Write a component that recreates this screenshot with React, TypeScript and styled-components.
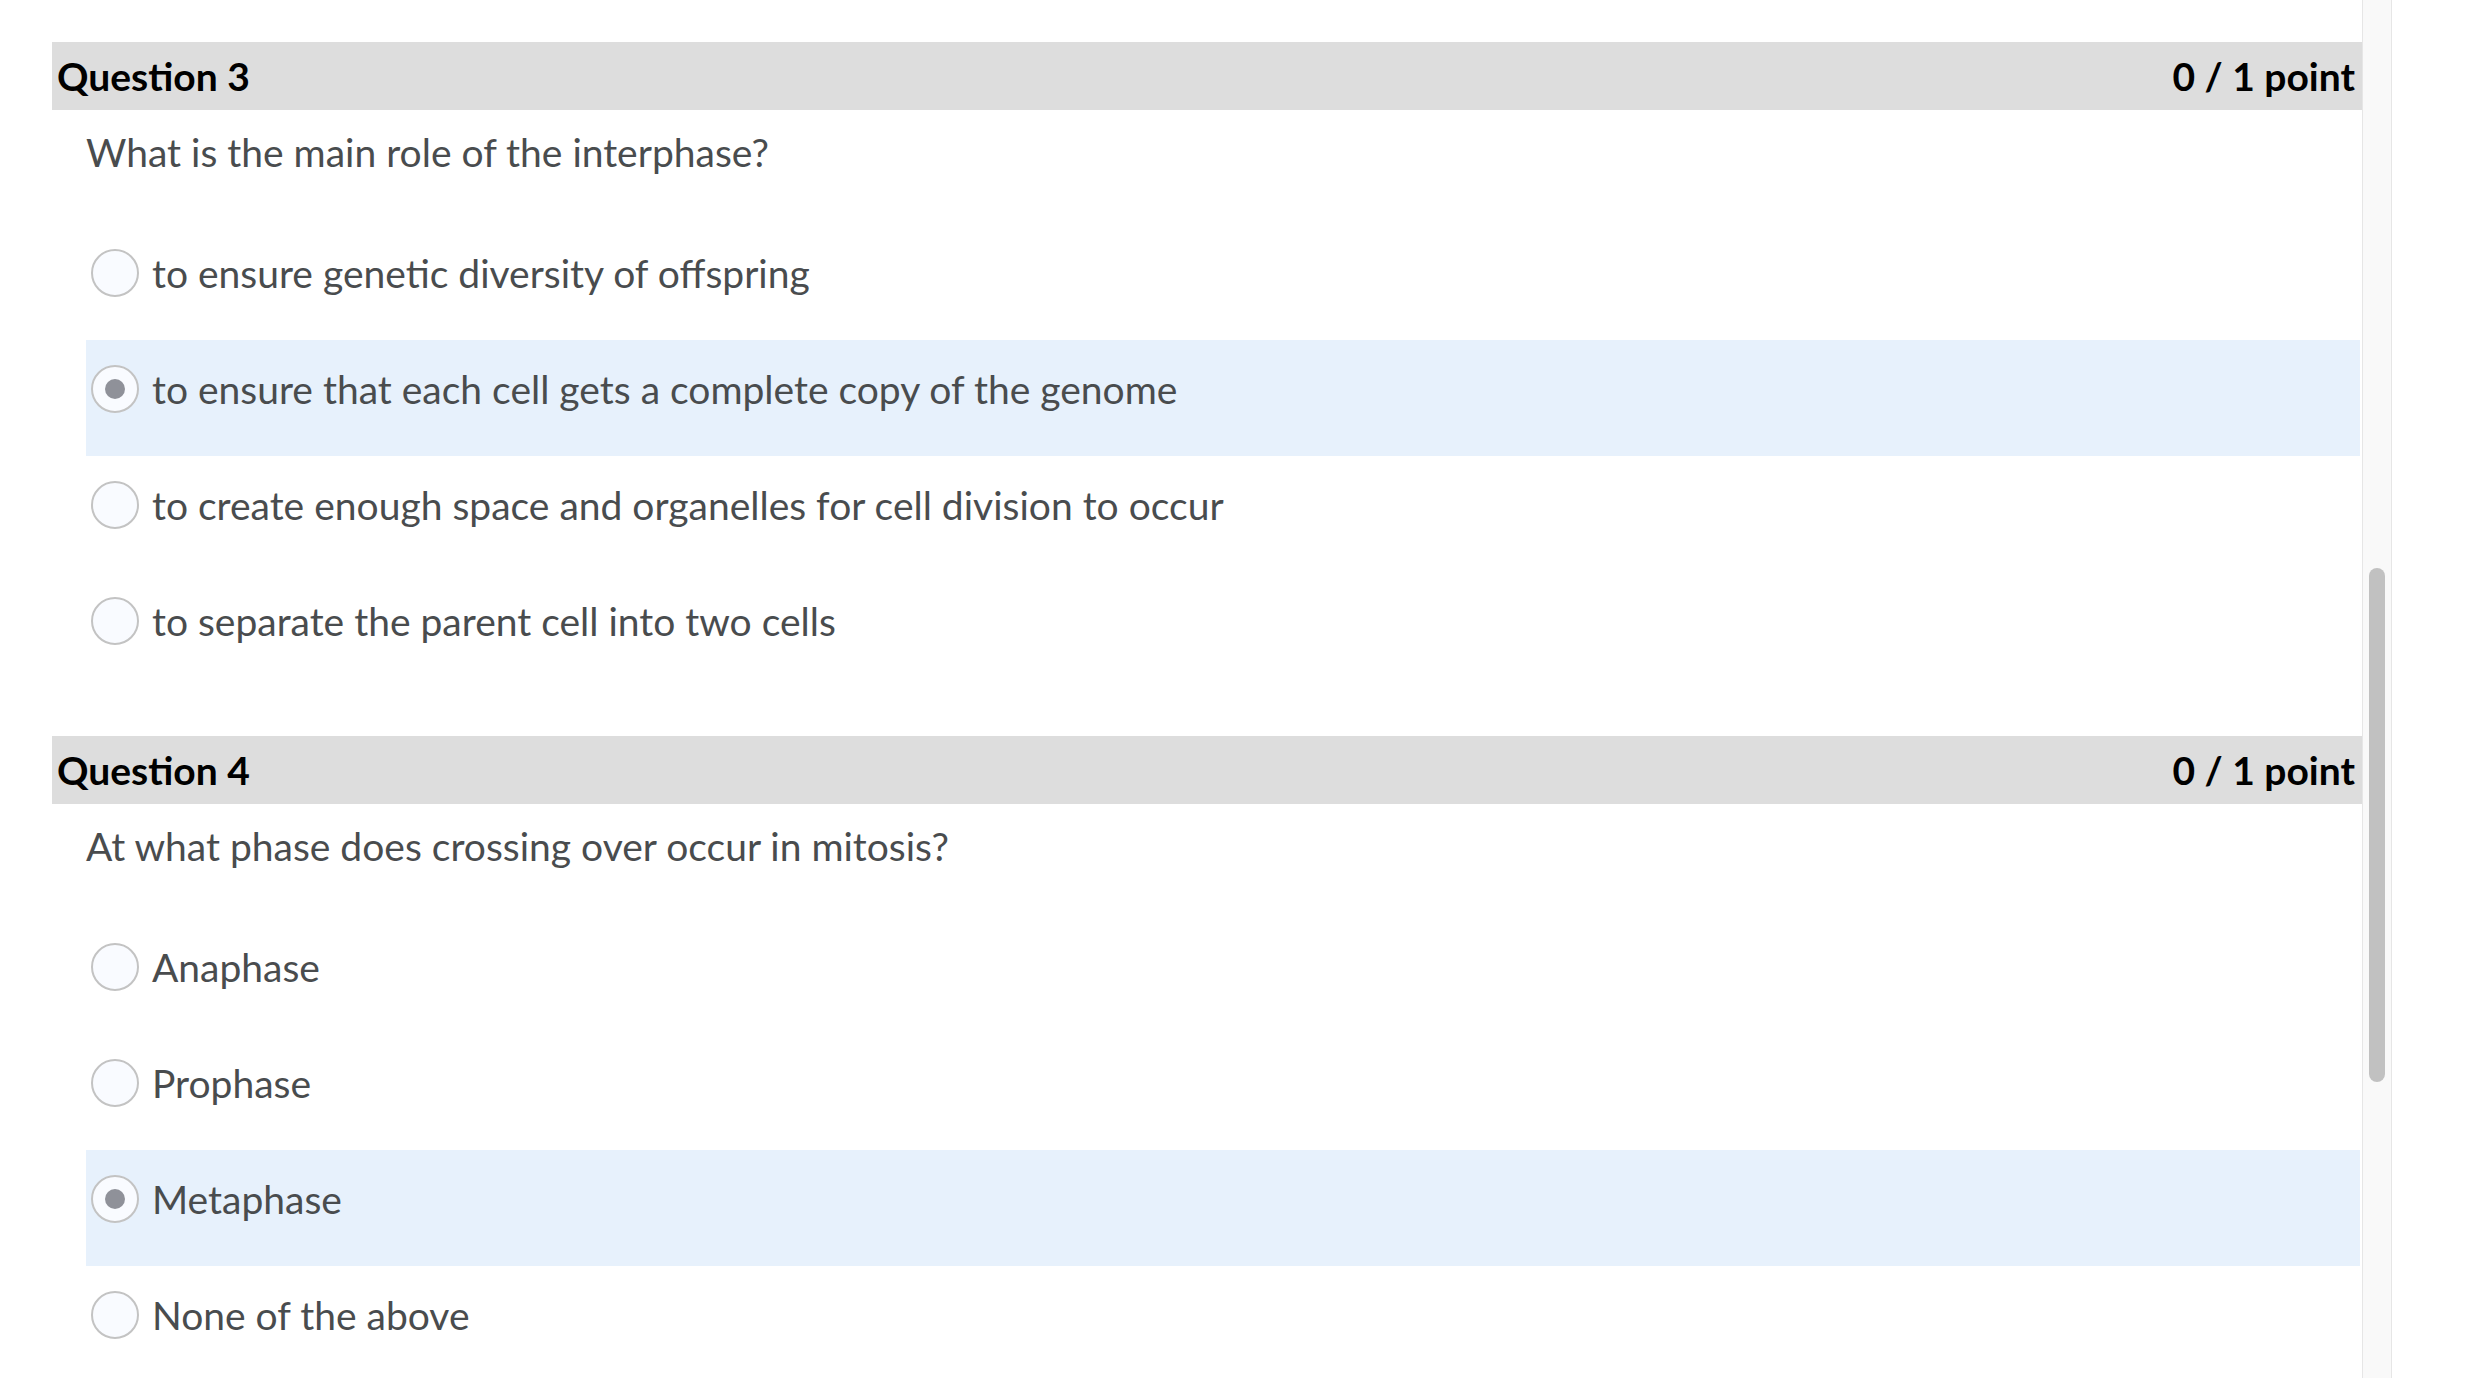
import React from "react";
import styled, { createGlobalStyle } from "styled-components";

const GlobalStyle = createGlobalStyle`
  html, body {
    margin: 0;
    padding: 0;
    background: #ffffff;
    overflow: hidden;
  }
  body {
    font-family: Lato, "Open Sans", sans-serif;
  }
`;

const Page = styled.div`
  display: flex;
  height: 1378px;
  overflow: hidden;
`;

const Content = styled.div`
  width: 2310px;
  padding: 42px 0 0 52px;
`;

const Scrollbar = styled.div`
  width: 28px;
  height: 100%;
  background: #f9f9f9;
  border-left: 1px solid #e6e6e6;
  border-right: 1px solid #e6e6e6;
  display: flex;
  justify-content: center;
`;

const Thumb = styled.div`
  width: 16px;
  height: 514px;
  margin-top: 568px;
  border-radius: 8px;
  background: #c1c1c1;
`;

const Question = styled.section`
  margin-bottom: 48px;
`;

const Header = styled.div`
  height: 68px;
  display: flex;
  align-items: center;
  justify-content: space-between;
  padding: 0 7px 0 5px;
  background: #dddddd;
  color: #000000;
  font-size: 39px;
  font-weight: 700;
`;

const Body = styled.div`
  padding: 16px 0 0 34px;
`;

const Prompt = styled.p`
  margin: 0 0 46px 0;
  font-size: 39px;
  line-height: 52px;
  color: #494c4e;
`;

const Option = styled.div<{ $selected?: boolean }>`
  height: 116px;
  box-sizing: border-box;
  padding: 25px 0 0 5px;
  display: flex;
  align-items: flex-start;
  gap: 13px;
  margin-right: 2px;
  background: ${(p) => (p.$selected ? "#e7f1fc" : "transparent")};
`;

const Radio = styled.span<{ $checked?: boolean }>`
  width: 48px;
  height: 48px;
  box-sizing: border-box;
  border-radius: 50%;
  border: 2px solid #c3c3c3;
  background: #f9fbff;
  display: flex;
  align-items: center;
  justify-content: center;
  flex-shrink: 0;

  &::after {
    content: "";
    display: ${(p) => (p.$checked ? "block" : "none")};
    width: 20px;
    height: 20px;
    border-radius: 50%;
    background: #8f9199;
  }
`;

const OptionText = styled.span`
  font-size: 39px;
  line-height: 48px;
  color: #494c4e;
`;

type Q = {
  title: string;
  score: string;
  prompt: string;
  options: string[];
  selected: number;
};

const questions: Q[] = [
  {
    title: "Question 3",
    score: "0 / 1 point",
    prompt: "What is the main role of the interphase?",
    options: [
      "to ensure genetic diversity of offspring",
      "to ensure that each cell gets a complete copy of the genome",
      "to create enough space and organelles for cell division to occur",
      "to separate the parent cell into two cells",
    ],
    selected: 1,
  },
  {
    title: "Question 4",
    score: "0 / 1 point",
    prompt: "At what phase does crossing over occur in mitosis?",
    options: ["Anaphase", "Prophase", "Metaphase", "None of the above"],
    selected: 2,
  },
];

const App = () => {
  return (
    <>
      <GlobalStyle />
      <Page>
        <Content>
          {questions.map((q) => (
            <Question key={q.title}>
              <Header>
                <span>{q.title}</span>
                <span>{q.score}</span>
              </Header>
              <Body>
                <Prompt>{q.prompt}</Prompt>
                {q.options.map((o, i) => (
                  <Option key={o} $selected={i === q.selected}>
                    <Radio $checked={i === q.selected} />
                    <OptionText>{o}</OptionText>
                  </Option>
                ))}
              </Body>
            </Question>
          ))}
        </Content>
        <Scrollbar>
          <Thumb />
        </Scrollbar>
      </Page>
    </>
  );
};

export default App;
